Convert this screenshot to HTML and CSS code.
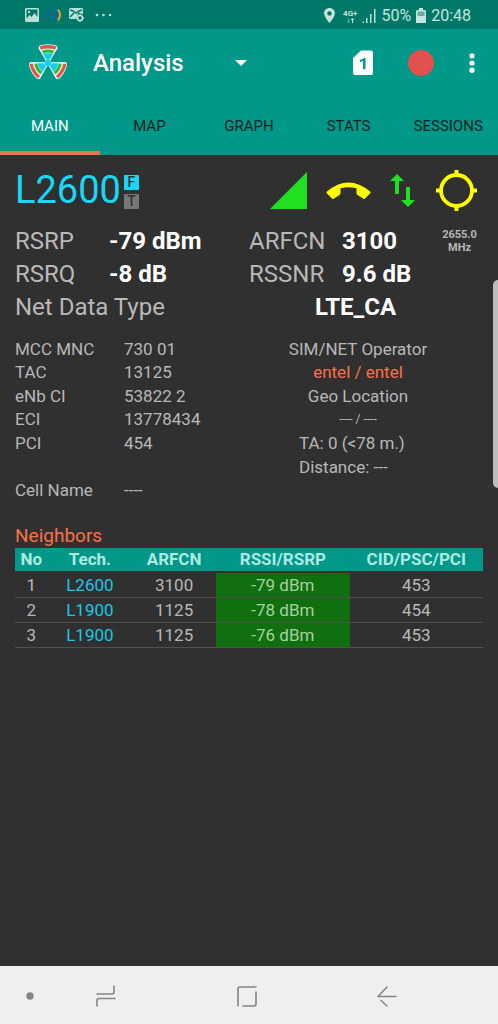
FILE: index.html
```
<!DOCTYPE html>
<html lang="en">
<head>
<meta charset="utf-8">
<meta name="viewport" content="width=device-width, initial-scale=1">
<title>Analysis</title>
<link rel="stylesheet" href="styles.css">
</head>
<body>
<div class="statusbar">
  <div class="status-group">
    <svg width="14" height="14" viewBox="0 0 14 14"><path fill="#b9dfd9" fill-rule="evenodd" d="M1 0h12l1 1v12l-1 1H1l-1-1V1zM1.500 1.500v9L4.500 7l2 2 3-4 3 4V1.500zM3 3h2v2H3z"/></svg>
    <svg width="18" height="14" viewBox="0 0 18 14"><circle cx="7" cy="7" r="5.500" fill="#0a6a8c" stroke="#0b609c"/><path d="M2 7h10M7 2v10M3 4q4 3 8 0M3 10q4-3 8 0" stroke="#07766f" fill="none"/><path d="M13 1.500q4 5 0 11" fill="none" stroke="#e5a02c" stroke-width="2"/></svg>
    <svg width="16" height="14" viewBox="0 0 16 14"><path fill="#b9dfd9" d="M1 0h12l1 1v5H9l-2 5H1l-1-1V1z"/><path d="M1 2l3 1 3 2 3-2 3-1M1 9l4-4M9 5l4 2" fill="none" stroke="#007868" stroke-width="1.500"/><circle cx="11" cy="10" r="2.500" fill="#007868" stroke="#b9dfd9" stroke-width="1.500"/><path d="M11 6v1M11 13v1M7 10h1M14 10h1M8.500 7.500l.5.5M13.500 7.500l-.5.5M8.500 12.500l.5-.5M13.500 12.500l-.5-.5" stroke="#b9dfd9" stroke-width="1.500"/></svg>
    <svg class="more" width="17" height="4" viewBox="0 0 17 4" fill="#b9dfd9"><circle cx="2" cy="2" r="1.300"/><circle cx="8.500" cy="2" r="1.300"/><circle cx="15" cy="2" r="1.300"/></svg>
  </div>
  <div class="status-group status-right">
    <svg width="11" height="15" viewBox="0 0 11 15"><path fill="#c5e3df" fill-rule="evenodd" d="M5.500 0C2.500 0 0 2.300 0 5.200 0 8.500 5.500 15 5.500 15S11 8.500 11 5.200C11 2.300 8.500 0 5.500 0zm0 3.200a2.200 2.200 0 1 1 0 4.400 2.200 2.200 0 0 1 0-4.400z"/></svg>
    <span class="network"><span>4G+</span><svg width="9" height="5" viewBox="0 0 9 5"><path d="M2 0v3H.500L2.500 5l2-2H3V0z" fill="#5aa89e"/><path d="M6 5V2H4.500l2-2 2 2H7v3z" fill="#d5ebe8"/></svg></span>
    <svg width="14" height="14" viewBox="0 0 14 14" fill="#b9dfd9"><path d="M0 14l2-2v2zM4 9h1.500v5H4zM8 5h1.500v9H8zM12 0h1.500v14H12z"/></svg>
    <span>50%</span>
    <svg width="10" height="15" viewBox="0 0 10 15"><path fill="#c5e3df" d="M3 0h4v2h2l1 1v12H0V3l1-1h2z"/><path fill="#6caaa2" d="M1.500 3.500h7V8h-7z"/></svg>
    <time>20:48</time>
  </div>
</div>
<header class="appbar">
  <div class="toolbar">
    <svg class="logo" width="38" height="38" viewBox="-19 -19 38 38">
      <defs><g id="blade">
        <path d="M-2-2L-9.500-14.500Q-9.500-17-8-17.500Q0-20 8-17.500Q9.500-17 9.500-14.500L2-2z" fill="#e8f5f2"/>
        <path d="M-1.500-3L-5-9Q0-11 5-9L1.500-3z" fill="#18ccec"/>
        <path d="M-5.500-10.800Q0-13 5.500-10.800" fill="none" stroke="#30b830" stroke-width="3"/>
        <path d="M-7.800-15Q0-17.500 7.800-15" fill="none" stroke="#e75350" stroke-width="3.400"/>
      </g></defs>
      <use href="#blade"/><use href="#blade" transform="rotate(120)"/><use href="#blade" transform="rotate(240)"/>
      <circle r="3.500" fill="#18ccec" stroke="#95e4e8" stroke-width=".5"/>
    </svg>
    <div class="picker">
      <select class="picker-select" aria-label="View"><option>Analysis</option></select>
      <svg class="picker-arrow" width="12" height="6" viewBox="0 0 12 6"><path d="M0 0h12L6 6z" fill="#fff"/></svg>
    </div>
    <div class="actions">
      <button class="icon-button" aria-label="SIM 1"><svg width="20" height="26" viewBox="0 0 20 26"><path d="M8 .5h10q2 0 2 2V23q0 2-2 2H2q-2 0-2-2V8z" fill="#fff"/><path d="M10 19V11L7 12.200V10l4.500-2h1v11z" fill="#009888"/></svg></button>
      <button class="icon-button" aria-label="Record"><svg width="26" height="26" viewBox="0 0 26 26"><circle cx="13" cy="13" r="13" fill="#e25050"/></svg></button>
      <button class="icon-button" aria-label="More options"><svg width="6" height="20" viewBox="0 0 6 20" fill="#fff"><circle cx="3" cy="2.800" r="2.600"/><circle cx="3" cy="10" r="2.600"/><circle cx="3" cy="17.200" r="2.600"/></svg></button>
    </div>
  </div>
  <nav class="tabs">
    <button class="tab tab-active">MAIN</button>
    <button class="tab">MAP</button>
    <button class="tab">GRAPH</button>
    <button class="tab">STATS</button>
    <button class="tab">SESSIONS</button>
  </nav>
</header>
<main class="content">
  <div class="band">
    <h1 class="band-name">L2600</h1>
    <div class="duplex"><span class="chip chip-on">F</span><span class="chip">T</span></div>
    <div class="indicators">
      <svg width="37" height="37" viewBox="0 0 37 37"><path d="M37 0v37H0z" fill="#20e020"/></svg>
      <svg width="45" height="18" viewBox="0 0 45 18"><path d="M1 9.500Q22.500-8.500 44 9.500q1 1 0 2l-5 5q-1 1-2 0l-5.500-3.500q-1-.5-1-2V6.200q-8-2-16 0v4.800q0 1.500-1 2L8 16.500q-1 1-2 0l-5-5q-1-1 0-2z" fill="#ff0"/></svg>
      <svg width="25" height="34" viewBox="0 0 25 34" fill="#20e020"><path d="M7 0l7 7H9v13H5V7H0zM16 13h4v13h5l-7 7-7-7h5z"/></svg>
      <svg width="43" height="41" viewBox="-2 0 43 41" fill="none" stroke="#ff0" stroke-width="4"><circle cx="20.500" cy="20.500" r="15.500" stroke-width="3.800"/><path d="M20.500 0v6M20.500 35v6M0 20.500h6M35 20.500h6"/></svg>
    </div>
  </div>
  <div class="signal">
    <span>RSRP</span><b>-79 dBm</b><span>ARFCN</span><b>3100</b><small class="freq">2655.0<br>MHz</small>
    <span>RSRQ</span><b>-8 dB</b><span>RSSNR</span><b>9.6 dB</b>
  </div>
  <div class="net-type"><span>Net Data Type</span><b>LTE_CA</b></div>
  <div class="details">
    <dl class="cell">
      <dt>MCC MNC</dt><dd>730 01</dd>
      <dt>TAC</dt><dd>13125</dd>
      <dt>eNb CI</dt><dd>53822 2</dd>
      <dt>ECI</dt><dd>13778434</dd>
      <dt>PCI</dt><dd>454</dd>
      <dt class="cell-name">Cell Name</dt><dd class="cell-name">----</dd>
    </dl>
    <div class="operator">
      <span>SIM/NET Operator</span>
      <span class="accent">entel / entel</span>
      <span>Geo Location</span>
      <span class="geo">---- / ----</span>
      <span class="measure">TA: 0 (&lt;78 m.)</span>
      <span class="measure">Distance: ---</span>
    </div>
  </div>
  <h2 class="section-title">Neighbors</h2>
  <table class="neighbors">
    <colgroup><col class="col-no"><col class="col-mid"><col class="col-mid"><col><col></colgroup>
    <thead><tr><th>No</th><th>Tech.</th><th>ARFCN</th><th>RSSI/RSRP</th><th>CID/PSC/PCI</th></tr></thead>
    <tbody>
      <tr><td>1</td><td class="tech">L2600</td><td>3100</td><td class="level">-79 dBm</td><td>453</td></tr>
      <tr><td>2</td><td class="tech">L1900</td><td>1125</td><td class="level">-78 dBm</td><td>454</td></tr>
      <tr><td>3</td><td class="tech">L1900</td><td>1125</td><td class="level">-76 dBm</td><td>453</td></tr>
    </tbody>
  </table>
  <div class="edge-handle"></div>
</main>
<footer class="navbar">
  <button class="icon-button" aria-label="Hide bar"><svg width="8" height="8" viewBox="0 0 8 8"><circle cx="4" cy="4" r="3.700" fill="#858585"/></svg></button>
  <button class="icon-button nav-recents" aria-label="Recents"><svg width="20" height="22" viewBox="0 0 20 22" fill="none" stroke="#858585" stroke-width="1.600" stroke-linecap="round"><path d="M1 9h15q2 0 2-2V1M19 13.500H3q-2 0-2 2V21"/></svg></button>
  <button class="icon-button nav-home" aria-label="Home"><svg width="20" height="21" viewBox="0 0 20 21" fill="none" stroke="#858585" stroke-width="1.600" stroke-linecap="round"><path d="M1 20V3q0-2 2-2h16M19 6v12q0 2-2 2H6"/></svg></button>
  <button class="icon-button nav-back" aria-label="Back"><svg width="20" height="21" viewBox="0 0 20 21" fill="none" stroke="#858585" stroke-width="1.600" stroke-linecap="round" stroke-linejoin="round"><path d="M10 1L1 10.500h18M4 14.500l6 5.500"/></svg></button>
</footer>
</body>
</html>
```
FILE: styles.css
```
* { box-sizing: border-box; }
body {
  margin: 0;
  min-height: 100vh;
  display: flex;
  flex-direction: column;
  background: #303030;
  color: #b8b8b8;
  font-family: Roboto, "Liberation Sans", sans-serif;
  font-size: 17px;
}
svg { display: block; flex: none; }
button, select { font: inherit; border: 0; background: none; padding: 0; }
h1, h2, dl, dd { margin: 0; font-weight: 400; }

.statusbar {
  display: flex;
  justify-content: space-between;
  height: 29px;
  padding: 0 27px 0 25px;
  background: #007868;
  color: #c5e3df;
  font-size: 16px;
}
.status-group { display: flex; align-items: center; gap: 6px; }
.more { margin-left: 4px; }
.status-right { gap: 5px; padding-top: 2px; }
.network {
  display: flex;
  flex-direction: column;
  align-items: center;
  margin-left: 3px;
  font-size: 8px;
  font-weight: 700;
  line-height: 9px;
}

.appbar { background: #009888; }
.toolbar { display: flex; align-items: center; height: 68px; padding: 0 23px 0 29px; }
.picker { position: relative; width: 154px; margin-left: 26px; }
.picker-select {
  display: block;
  width: 100%;
  appearance: none;
  color: #fff;
  font-size: 24px;
  font-weight: 500;
  line-height: 32px;
}
.picker-arrow { position: absolute; right: 0; top: 13px; pointer-events: none; }
.actions { display: flex; align-items: center; gap: 35px; margin-left: auto; }
.icon-button { display: block; cursor: pointer; }
.tabs { display: grid; grid-template-columns: repeat(5, 1fr); }
.tab {
  height: 58px;
  padding-top: 3px;
  border-bottom: 4px solid transparent;
  color: #06231f;
  font-size: 15px;
}
.tab-active { color: #fff; border-color: #ec7350; }

.content { position: relative; flex: 1; padding: 15px 15px 0; }
.band { display: flex; align-items: center; height: 41px; }
.band-name { color: #18d8f8; font-size: 38px; line-height: 41px; }
.duplex { display: grid; gap: 4px; margin-left: 3px; padding-top: 3px; }
.chip {
  width: 15px;
  border-radius: 1px;
  background: #777;
  color: #303030;
  font-size: 14px;
  font-weight: 500;
  line-height: 15px;
  text-align: center;
}
.chip-on { background: #18d8f8; }
.indicators { display: flex; align-items: center; gap: 19px; margin-left: auto; padding-right: 6px; }

.signal {
  display: grid;
  grid-template-columns: 94fr 140fr 93fr 94fr 47fr;
  margin-top: 14px;
  font-size: 24px;
  line-height: 33px;
}
.signal b, .net-type b { color: #fff; font-weight: 700; }
.freq { padding-top: 3px; font-size: 11px; font-weight: 700; line-height: 13px; text-align: center; }
.net-type { display: grid; grid-template-columns: 213px 1fr; font-size: 24px; line-height: 33px; }
.net-type b { text-align: center; }

.details { display: grid; grid-template-columns: 218px 1fr; min-height: 165px; margin-top: 13px; }
.cell, .operator { display: grid; grid-template-rows: repeat(7, 1fr); align-items: center; }
.cell { grid-template-columns: 109px 1fr; }
.cell-name { grid-row: 7; }
.operator { justify-items: center; }
.accent { color: #f87048; }
.geo { font-size: 12px; }
.measure { justify-self: start; margin-left: 66px; }

.section-title { margin-top: 22px; color: #f87048; font-size: 19px; line-height: 24px; }
.neighbors { width: 100%; table-layout: fixed; border-collapse: collapse; line-height: 24px; text-align: center; }
.col-no { width: 7%; }
.col-mid { width: 18%; }
.neighbors th { padding: 0; background: #009888; color: #b0e8e0; font-weight: 700; line-height: 23px; }
.neighbors thead { border-bottom: 2px solid #303030; }
.neighbors td { padding: 0; border-bottom: 1px solid #505050; }
.neighbors .tech { color: #18c8e8; }
.neighbors .level { background: #107010; color: #a8d0a0; }
.edge-handle {
  position: absolute;
  right: 0;
  top: 125px;
  width: 5px;
  height: 208px;
  border-radius: 5px 0 0 5px;
  background: #bdbdbd;
}

.navbar { display: flex; align-items: center; height: 58px; padding: 2px 26px 0; background: #efefef; }
.nav-recents { margin-left: 14%; }
.nav-home, .nav-back { margin-left: 27%; }
```
